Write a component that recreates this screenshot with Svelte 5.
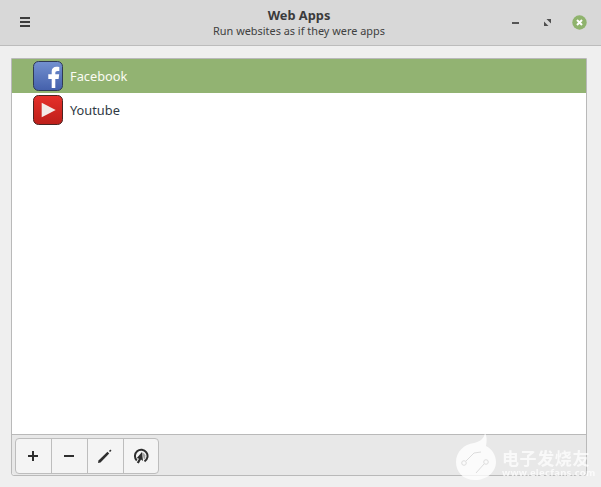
<script>
  const apps = [
    { name: "Facebook", icon: "fb", selected: true },
    { name: "Youtube", icon: "yt", selected: false },
  ];
</script>

<div class="window">
  <header class="titlebar">
    <button class="menu" aria-label="Menu">
      <svg width="12" height="11" viewBox="0 0 12 11"><path d="M1 1h10M1 5h10M1 9h10" stroke="#3d3d3d" stroke-width="2" /></svg>
    </button>
    <div class="titles">
      <div class="title">Web Apps</div>
      <div class="subtitle">Run websites as if they were apps</div>
    </div>
    <div class="controls">
      <svg width="7" height="4" viewBox="0 0 7 4"><rect y="1" width="7" height="2" fill="#555" /></svg>
      <svg width="7" height="7" viewBox="0 0 7 7"><path d="M2.500 0H7V4.500ZM4.500 7H0V2.500Z" fill="#4f4f4f" /></svg>
      <svg class="close" width="15" height="15" viewBox="0 0 15 15"><circle cx="7.500" cy="7.500" r="7.200" fill="#8fb36d" /><path d="M5 5l5 5M10 5l-5 5" stroke="#fff" stroke-width="2" /></svg>
    </div>
  </header>

  <main class="content">
    <div class="frame">
      <ul class="list">
        {#each apps as app}
          <li class:selected={app.selected}>
            {#if app.icon === "fb"}
              <svg class="icon" width="30" height="30" viewBox="0 0 30 30">
                <defs>
                  <linearGradient id="fbg" x1="0" y1="0" x2="0" y2="1">
                    <stop offset="0" stop-color="#7391d0" />
                    <stop offset="1" stop-color="#4460ab" />
                  </linearGradient>
                </defs>
                <rect x="0.500" y="0.500" width="29" height="29" rx="5" fill="url(#fbg)" stroke="#2f3a55" />
                <path d="M18.700 27V18h-3.400v-4.800h3.400v-3C18.700 7.200 20.700 5.700 23.400 5.700c1.300 0 2.500.1 2.900.2v4h-1.700c-1.600 0-2.300.7-2.300 2v1.300h3.900l-.6 4.800h-3.300v9Z" fill="#fff" />
              </svg>
            {:else}
              <svg class="icon" width="30" height="30" viewBox="0 0 30 30">
                <defs>
                  <linearGradient id="ytg" x1="0" y1="0" x2="0" y2="1">
                    <stop offset="0" stop-color="#e6302a" />
                    <stop offset="1" stop-color="#bd1f1a" />
                  </linearGradient>
                </defs>
                <rect x="0.500" y="0.500" width="29" height="29" rx="5" fill="url(#ytg)" stroke="#4a2523" />
                <path d="M8.700 7.700L22.700 15 8.700 22.300Z" fill="#f3ebe8" />
              </svg>
            {/if}
            <span>{app.name}</span>
          </li>
        {/each}
      </ul>
      <div class="toolbar">
        <div class="group">
          <button aria-label="Add">
            <svg width="12" height="12" viewBox="0 0 12 12"><path d="M6 1v10M1 6h10" stroke="#2e2e2e" stroke-width="2" /></svg>
          </button>
          <button aria-label="Remove">
            <svg width="12" height="12" viewBox="0 0 12 12"><path d="M1 6h10" stroke="#2e2e2e" stroke-width="2" /></svg>
          </button>
          <button aria-label="Edit">
            <svg width="16" height="16" viewBox="0 0 16 16"><path d="M1 15l.5-2.500L10.500 3.800 12.200 5.500 3.500 14.500Z" fill="#2e2e2e" /><path d="M12 3l1.300-1.500 1.200 1.200L13 4Z" fill="#2e2e2e" /></svg>
          </button>
          <button aria-label="Run">
            <svg width="16" height="16" viewBox="0 0 16 16">
              <path d="M3.800 12.500A6.300 6.300 0 1 1 11.500 13.400" fill="none" stroke="#2e2e2e" stroke-width="2" />
              <path d="M9 4.500A4 4 0 0 1 11 11.500Z" fill="#a3a3a3" />
              <path d="M9 4L10 13 8 11.500 5.800 15.500 3.800 14.500 6 10.800 3.800 10Z" fill="#2e2e2e" />
            </svg>
          </button>
        </div>
      </div>
    </div>
  </main>

  <div class="watermark" aria-hidden="true">
    <svg width="42" height="48" viewBox="0 0 42 48">
      <path d="M19 10C24 9 29 6 30 0c2 3 2 8 1 13 6 3 10 9 10 16 0 10-9 18-21 18S1 39 1 29 9 11 19 10Z" fill="#fff" fill-opacity=".8" />
      <path d="M11 28L19 20 26 19M29 31L21 40" fill="none" stroke="#dcdcdc" stroke-width="1" />
      <circle cx="9" cy="30" r="2.300" fill="none" stroke="#dcdcdc" />
      <circle cx="31" cy="29" r="2.300" fill="none" stroke="#dcdcdc" />
    </svg>
    <div class="mark-text">
      <div class="cn">电子发烧友</div>
      <div class="url">www.elecfans.com</div>
    </div>
  </div>
</div>

<style>
  :global(body) {
    margin: 0;
    background: #efefef;
  }
  .window {
    position: relative;
    width: 601px;
    height: 487px;
    display: flex;
    flex-direction: column;
    overflow: hidden;
    font-family: "Noto Sans", sans-serif;
    color: #303030;
  }
  .titlebar {
    height: 45px;
    flex: none;
    display: flex;
    align-items: center;
    background: #d8d8d8;
    border-bottom: 1px solid #bcbcbc;
    position: relative;
  }
  .menu {
    all: unset;
    display: flex;
    margin-left: 19px;
  }
  .titles {
    position: absolute;
    left: 0;
    right: 3px;
    top: 8px;
    text-align: center;
  }
  .title {
    font-size: 12.800px;
    font-weight: 700;
    line-height: 15px;
    color: #3b3b3b;
  }
  .subtitle {
    font-size: 10.900px;
    line-height: 15px;
    color: #404040;
  }
  .controls {
    margin-left: auto;
    margin-right: 14px;
    display: flex;
    align-items: center;
    gap: 25px;
  }
  .close {
    margin-left: -4px;
  }
  .content {
    flex: 1;
    padding: 12px 14px 11px 11px;
    display: flex;
    min-height: 0;
  }
  .frame {
    flex: 1;
    display: flex;
    flex-direction: column;
    border: 1px solid #b9b9b9;
    border-radius: 0 0 3px 3px;
    background: #fff;
  }
  .list {
    flex: 1;
    margin: 0;
    padding: 0;
    list-style: none;
  }
  .list li {
    height: 34px;
    display: flex;
    align-items: center;
    padding-left: 21px;
    gap: 7px;
    font-size: 12.800px;
    color: #303a44;
  }
  .list li.selected {
    background: #92b372;
    color: #fbfbf2;
  }
  .toolbar {
    height: 41px;
    flex: none;
    box-sizing: border-box;
    border-top: 1px solid #b9b9b9;
    background: #e8e8e8;
    padding: 3px;
    border-radius: 0 0 3px 3px;
  }
  .group {
    display: inline-flex;
    height: 34px;
    border: 1px solid #bdbdbd;
    border-radius: 4px;
    background: #f4f4f4;
    overflow: hidden;
  }
  .group button {
    all: unset;
    box-sizing: border-box;
    width: 36px;
    padding-right: 1px;
    display: flex;
    align-items: center;
    justify-content: center;
    border-left: 1px solid #bdbdbd;
  }
  .group button:first-child,
  .group button:last-child {
    width: 35px;
  }
  .group button:first-child {
    border-left: 0;
  }
  .watermark {
    position: absolute;
    left: 455px;
    top: 433px;
    display: flex;
    gap: 5px;
    filter: blur(0.5px);
    pointer-events: none;
  }
  .mark-text {
    padding-top: 15px;
    color: rgba(255, 255, 255, 0.75);
  }
  .cn {
    font-family: "Noto Sans CJK SC", sans-serif;
    font-size: 17px;
    font-weight: 700;
    line-height: 20px;
    letter-spacing: 0.600px;
  }
  .url {
    font-size: 9.500px;
    font-weight: 700;
    line-height: 10px;
    letter-spacing: 0.300px;
    white-space: nowrap;
  }
</style>
